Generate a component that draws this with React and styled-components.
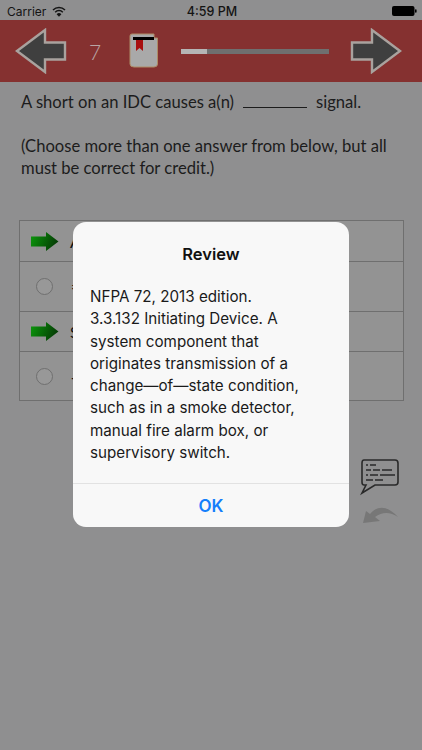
import React from 'react';
import styled, { createGlobalStyle } from 'styled-components';

const GlobalStyle = createGlobalStyle`
  html, body {
    margin: 0;
    padding: 0;
    background: #8f8f90;
    font-family: "Open Sans", "Liberation Sans", sans-serif;
  }
  * { box-sizing: border-box; }
`;

const Screen = styled.div`
  position: relative;
  width: 422px;
  height: 750px;
  overflow: hidden;
  background: #8f8f90;
`;

const StatusBar = styled.div`
  height: 20px;
  padding: 2px 5px 0 7px;
  display: grid;
  grid-template-columns: 1fr auto 1fr;
  align-items: center;
  color: #141414;
  font-family: "Inter", "Liberation Sans", sans-serif;
  font-size: 12px;
`;

const Carrier = styled.div`
  display: flex;
  align-items: center;
  gap: 6px;
`;

const Time = styled.div`
  font-weight: 500;
  font-size: 12.5px;
`;

const Battery = styled.div`
  justify-self: end;
  display: flex;
  align-items: center;
`;

const Toolbar = styled.div`
  height: 62px;
  background: #853130;
  display: flex;
  align-items: center;
  padding: 0 20px 0 15px;
`;

const PageNumber = styled.span`
  width: 46px;
  margin-left: 5px;
  text-align: center;
  font-family: "Lato", sans-serif;
  font-size: 21px;
  font-weight: 300;
  color: #b9a5a4;
`;

const BookIcon = styled.svg`
  margin-left: 10.5px;
`;

const Progress = styled.div`
  width: 148px;
  height: 5px;
  margin: 1px 0 0 22.5px;
  background: #6f6f6f;
`;

const ProgressFill = styled.div`
  height: 100%;
  background: #b5b5b5;
`;

const NextArrow = styled.div`
  margin-left: auto;
  display: flex;
`;

const Question = styled.div`
  padding: 9px 20px 0 21px;
  font-family: "Lato", "Open Sans", sans-serif;
  font-size: 16.6px;
  line-height: 22px;
  color: #1c1c1c;
`;

const Blank = styled.span`
  display: inline-block;
  width: 64px;
  margin: 0 9px;
  border-bottom: 1px solid #1c1c1c;
`;

const Note = styled.p`
  margin: 22px 0 0;
`;

const Options = styled.div`
  margin: 41px 19px 0;
  border: 1px solid #6f6f6f;
  width: 385px;
  background: #939393;
`;

const Option = styled.div`
  height: ${p => p.$h}px;
  display: flex;
  align-items: center;
  padding-left: ${p => (p.$correct ? 11 : 16)}px;
  gap: ${p => (p.$correct ? 11 : 18)}px;
  font-family: "Lato", sans-serif;
  font-size: 16px;
  color: #111;
  border-top: ${p => (p.$first ? 'none' : '1px solid #6f6f6f')};
`;

const Radio = styled.span`
  width: 17px;
  height: 17px;
  border-radius: 50%;
  border: 1px solid #6f6f6f;
  background: #989898;
`;

const SideIcons = styled.div`
  display: flex;
  flex-direction: column;
  align-items: flex-end;
  gap: 8px;
  margin: 57px 22px 0 0;
`;

const UndoIcon = styled.svg`
  margin-right: 2px;
`;

const Alert = styled.div`
  position: absolute;
  left: 73px;
  top: 222px;
  width: 276px;
  height: 305px;
  border-radius: 13px;
  background: #f8f8f8;
  display: flex;
  flex-direction: column;
  font-family: "Inter", "Open Sans", sans-serif;
`;

const AlertBody = styled.div`
  flex: 1;
  padding: 21px 17px 0;
`;

const AlertTitle = styled.div`
  text-align: center;
  font-weight: 600;
  font-size: 16.5px;
  line-height: 22px;
  color: #111;
`;

const AlertText = styled.div`
  margin-top: 21px;
  font-size: 15.2px;
  line-height: 22.3px;
  color: #1a1a1a;
`;

const AlertButton = styled.div`
  height: 44px;
  border-top: 1px solid #e2e2e2;
  display: flex;
  align-items: center;
  justify-content: center;
  font-weight: 600;
  font-size: 17px;
  color: #147efb;
`;

const Arrow = ({ flip }) => (
  <svg width="52" height="46" viewBox="0 0 52 46" style={flip ? { transform: 'scaleX(-1)' } : undefined}>
    <path d="M2 23 L30 2 V14.5 H50 V31.5 H30 V44 Z" fill="#3f3f3f" stroke="#a9a29e" strokeWidth="2.4" />
  </svg>
);

const GreenArrow = () => (
  <svg width="28" height="19" viewBox="0 0 28 19">
    <defs>
      <linearGradient id="ga" x1="0" x2="1" y1="0" y2="0.3">
        <stop offset="0" stopColor="#0c9a0c" />
        <stop offset="1" stopColor="#053f05" />
      </linearGradient>
    </defs>
    <path d="M0 4.5 H15 V0 L27.5 9.5 L15 19 V14.5 H0 Z" fill="url(#ga)" />
  </svg>
);

function App() {
  return (
    <>
      <GlobalStyle />
      <Screen>
        <StatusBar>
          <Carrier>
            Carrier
            <svg width="14" height="11" viewBox="0 0 14 11" fill="none" stroke="#141414" strokeWidth="1.5">
              <path d="M1 4 A8.5 8.5 0 0 1 13 4" />
              <path d="M3.2 6.2 A5.3 5.3 0 0 1 10.8 6.2" />
              <path d="M7 10.8 L4.6 8.3 A3.4 3.4 0 0 1 9.4 8.3 Z" fill="#141414" stroke="none" />
            </svg>
          </Carrier>
          <Time>4:59 PM</Time>
          <Battery>
            <svg width="25" height="10" viewBox="0 0 25 10">
              <rect x="0" y="0" width="22.5" height="10" rx="2" fill="#000" />
              <rect x="23" y="3.2" width="1.6" height="3.6" rx="0.8" fill="#000" />
            </svg>
          </Battery>
        </StatusBar>
        <Toolbar>
          <Arrow />
          <PageNumber>7</PageNumber>
          <BookIcon width="30" height="36" viewBox="0 0 30 36">
            <path d="M3 1 H25 V5 H28.5 V31 Q28.5 34 25 34 H5 Q1 34 1 31 V3 Q1 1 3 1 Z" fill="#a9a9a9" stroke="#ad8c66" strokeWidth="1" />
            <rect x="4" y="4" width="21" height="3" fill="#000" />
            <path d="M7 7 H14 V18 L10.5 15 L7 18 Z" fill="#a80f0f" />
          </BookIcon>
          <Progress>
            <ProgressFill style={{ width: `${(26 / 148) * 100}%` }} />
          </Progress>
          <NextArrow>
            <Arrow flip />
          </NextArrow>
        </Toolbar>
        <Question>
          A short on an IDC causes a(n)<Blank />signal.
          <Note>(Choose more than one answer from below, but all must be correct for credit.)</Note>
        </Question>
        <Options>
          <Option $first $correct $h={40}><GreenArrow />A</Option>
          <Option $h={50}><Radio />=</Option>
          <Option $correct $h={40}><GreenArrow />S</Option>
          <Option $h={49}><Radio />+</Option>
        </Options>
        <SideIcons>
          <svg width="40" height="38" viewBox="0 0 40 38" fill="none" stroke="#2a2a2a">
            <path d="M4 2 H35 Q38 2 38 5 V24 Q38 27 35 27 H15 L2 35 L6 27 H4 Q2 27 2 24 V5 Q2 2 4 2 Z" strokeWidth="1.6" />
            <path d="M6 7 H8 M10 7 H16 M6 12 H11 M13 12 H20 M22 12 H32 M6 17 H8 M10 17 H18 M20 17 H35 M6 22 H13 M15 22 H23" strokeWidth="1.6" />
          </svg>
          <UndoIcon width="36" height="20" viewBox="0 0 36 20">
            <path d="M1 19 L4 7 L8 10 Q20 -4 36 13 Q24 5 13 13 L18 17 Z" fill="#777" />
          </UndoIcon>
        </SideIcons>
        <Alert>
          <AlertBody>
            <AlertTitle>Review</AlertTitle>
            <AlertText>
              NFPA 72, 2013 edition.<br />
              3.3.132 Initiating Device. A<br />
              system component that<br />
              originates transmission of a<br />
              change—of—state condition,<br />
              such as in a smoke detector,<br />
              manual fire alarm box, or<br />
              supervisory switch.
            </AlertText>
          </AlertBody>
          <AlertButton>OK</AlertButton>
        </Alert>
      </Screen>
    </>
  );
}

export default App;
